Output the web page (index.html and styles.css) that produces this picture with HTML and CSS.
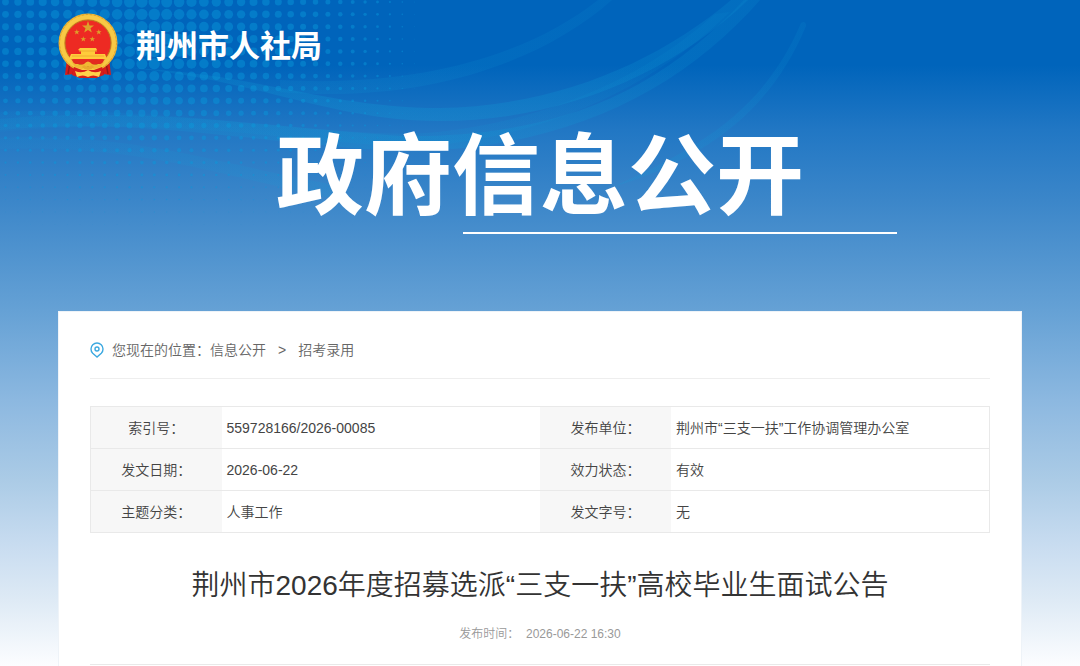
FILE: index.html
```html
<!DOCTYPE html>
<html lang="zh-CN">
<head>
  <meta charset="UTF-8" />
  <meta name="viewport" content="width=device-width, initial-scale=1.0"/>
  <title>荆州市2026年度招募选派“三支一扶”高校毕业生面试公告</title>
  <link rel="stylesheet" href="styles.css">
</head>
<body>
  <svg class="backdrop" width="1080" height="310" viewBox="0 0 1080 310" aria-hidden="true">
    <defs>
      <linearGradient id="ribbon" x1="0" x2="800" y1="0" y2="0" gradientUnits="userSpaceOnUse">
        <stop offset="0" stop-color="#0fa0d8" stop-opacity=".6"/>
        <stop offset=".5" stop-color="#0fa0d8"/>
        <stop offset="1" stop-color="#0fa0d8" stop-opacity=".6"/>
      </linearGradient>
    </defs>
    <g id="dots" fill="#0899dc" fill-opacity="0.45"></g>
    <g fill="url(#ribbon)">
      <path opacity=".25" d="M130 68C260 74 330 108 440 108C560 106 660 60 731 0L748 0C670 75 560 121 440 121C330 121 260 80 130 68Z"/>
      <path opacity=".22" d="M0 119C140 106 260 126 400 136C560 138 660 90 744 0L760 0C680 92 560 152 400 151C260 144 140 116 0 130Z"/>
      <path opacity=".12" d="M0 112C160 106 280 132 410 134C530 128 640 82 715 14L730 12C650 90 540 140 410 147C280 140 160 116 0 132Z"/>
      <path opacity=".13" d="M280 80C420 88 530 54 598 0L612 0C540 64 420 104 280 92Z"/>
      <path opacity=".2" d="M801 23Q806 20 806 26C772 108 710 158 610 188C700 148 764 110 801 23Z"/>
      <path opacity=".14" d="M0 138C140 134 200 160 340 186L340 200C220 176 140 144 0 149Z"/>
    </g>
  </svg>

  <header class="header container">
    <a class="brand" href="#">
      <svg class="emblem" width="60" height="66" viewBox="0 0 60 66" aria-hidden="true">
        <path d="M9 45L7 62L16 61L22 65H38L44 61L53 62L51 45Z" fill="#d71d1a"/>
        <path d="M12 50L10 61M17 54L15 61M48 50L50 61M43 54L45 61" stroke="#98191a" stroke-width="1.4"/>
        <circle cx="30" cy="30" r="29.5" fill="#efb838"/>
        <circle cx="30" cy="30" r="26" fill="none" stroke="#f8c945" stroke-width="4"/>
        <circle cx="30" cy="30" r="28.5" fill="none" stroke="#e0a02c" stroke-width="1" stroke-dasharray="2 2"/>
        <circle cx="30" cy="30" r="23" fill="#ed2a23" stroke="#bd741d"/>
        <g fill="#dda22b">
          <path id="star" d="M30 8L31.5 12.5H36L32.5 15.2L33.8 19.5L30 17L26.2 19.5L27.5 15.2L24 12.5H28.5Z"/>
          <use href="#star" transform="translate(5 12.5) scale(.46)"/>
          <use href="#star" transform="translate(27 12.5) scale(.46)"/>
          <use href="#star" transform="translate(11.5 19.5) scale(.46)"/>
          <use href="#star" transform="translate(20.5 19.5) scale(.46)"/>
        </g>
        <path d="M22 35H38L39 37L37 38V41H47L49 46H11L13 41H23V38L20 37Z" fill="#ffcb3b"/>
        <path d="M21 38H39M14 43H46" stroke="#f0ab30" stroke-width="1"/>
        <path d="M14 47H46L44 51H16Z" fill="#e32b20"/>
        <path d="M13 48Q20 54 26 51Q30 46 34 51Q40 54 47 48L43 54L36 56L30 53L24 56L17 54Z" fill="#f0b834"/>
        <path d="M16 54L24 57H36L44 54L46 62L38 65H22L14 62Z" fill="#d71d1a"/>
        <path d="M17 58Q24 61 30 57Q36 61 43 58L41 64Q35 61 30 64Q25 61 19 64Z" fill="#ffd24a"/>
        <path d="M25 53Q30 58 35 53" fill="none" stroke="#e9a92e" stroke-width="3"/>
      </svg>
      <span>荆州市人社局</span>
    </a>
    <div class="banner">政府信息公开</div>
  </header>

  <main class="card container">
    <nav class="crumbs" aria-label="您现在的位置">
      <svg class="pin" width="14" height="16" viewBox="0 0 14 16" fill="none" stroke="#3da9e0" stroke-width="1.4" aria-hidden="true">
        <path d="M7 15L2.7 11.2A6 6 0 1 1 11.3 11.2Z"/>
        <circle cx="7" cy="7" r="2"/>
      </svg>
      <span>您现在的位置：</span>
      <a href="#">信息公开</a>
      <span class="sep">&gt;</span>
      <a href="#">招考录用</a>
    </nav>

    <table class="info">
      <tr>
        <th scope="row">索引号：</th>
        <td>559728166/2026-00085</td>
        <th scope="row">发布单位：</th>
        <td>荆州市“三支一扶”工作协调管理办公室</td>
      </tr>
      <tr>
        <th scope="row">发文日期：</th>
        <td>2026-06-22</td>
        <th scope="row">效力状态：</th>
        <td>有效</td>
      </tr>
      <tr>
        <th scope="row">主题分类：</th>
        <td>人事工作</td>
        <th scope="row">发文字号：</th>
        <td>无</td>
      </tr>
    </table>

    <h1>荆州市2026年度招募选派“三支一扶”高校毕业生面试公告</h1>
    <p class="published">发布时间：&nbsp; <time datetime="2026-06-22T16:30">2026-06-22 16:30</time></p>
  </main>

  <script src="dots.js"></script>
</body>
</html>
```
FILE: styles.css
```css
* { box-sizing: border-box; }

body {
  margin: 0;
  min-height: 100vh;
  display: flex;
  flex-direction: column;
  font-family: "Liberation Sans", "Noto Sans CJK SC", sans-serif;
  font-size: 14px;
  font-weight: 350;
  line-height: 20px;
  color: #444;
  background: #fff linear-gradient(to bottom,
    #0064bb 0, #0064bb 65px, #2177c4 130px, #3b86c9 200px,
    #65a1d5 310px, #8cb8e0 400px, #abcbe6 480px,
    #c8dcf0 545px, #deeaf5 600px, #fcfdff 666px) no-repeat;
}

a {
  color: inherit;
  text-decoration: none;
}

.container {
  width: calc(100% - 116px);
  margin: 0 auto;
}

/* decoration behind the header */
.backdrop {
  position: absolute;
  top: 0;
  left: 0;
  z-index: -1;
}

.header {
  padding: 13px 0 77px;
  color: #fff;
  font-family: "Noto Sans CJK SC", sans-serif;
  font-weight: 700;
}

.brand {
  display: flex;
  align-items: flex-start;
  gap: 18px;
  font-size: 31px;
  line-height: 62px;
}

.emblem { display: block; }

.banner {
  margin-top: 34px;
  font-size: 88px;
  line-height: 112px;
  text-align: center;
}

.banner::after {
  content: "";
  display: block;
  width: 45%;
  height: 2px;
  margin-top: 7px;
  margin-left: 42%;
  background: #fff;
}

.card {
  flex: 1;
  padding: 28px 31px 0;
  background: #fff;
  border: 1px solid #eef3f8;
  border-bottom: 0;
}

.crumbs {
  display: flex;
  align-items: center;
  padding-bottom: 18px;
  margin-bottom: 27px;
  color: #666;
  border-bottom: 1px solid #eee;
}

.crumbs .pin { margin-right: 8px; }

.crumbs .sep { margin: 0 12px; }

.info {
  width: 100%;
  table-layout: fixed;
  border-collapse: collapse;
  border: 1px solid #e9e9e9;
}

.info tr { border-bottom: 1px solid #e9e9e9; }

.info th,
.info td {
  height: 42px;
  padding: 0 5px;
  font-weight: 350;
}

.info th {
  width: 131px;
  padding: 0;
  background: #f7f7f7;
}

h1 {
  margin: 32px 0 0;
  color: #333;
  font-size: 28px;
  font-weight: 350;
  line-height: 42px;
  text-align: center;
}

.published {
  margin: 17px 0 0;
  padding-bottom: 20px;
  font-size: 12px;
  color: #999;
  text-align: center;
  border-bottom: 1px solid #e9e9e9;
}
```
FILE: dots.js
```js
// halftone dots, largest near the emblem and fading right and down
const dots = document.getElementById("dots");
for (let row = 0; row < 19; row++) {
  for (let col = 0; col < 34; col++) {
    const x = 5.5 + col * 12.4;
    const y = 2 + row * 12.35;
    const fx = x < 150 ? 0.5 + x / 300 : 1 - (x - 150) / 275;
    const fy = y < 60 ? 1 : 1 - (y - 60) / 185;
    const c = document.createElementNS("http://www.w3.org/2000/svg", "circle");
    c.setAttribute("cx", x);
    c.setAttribute("cy", y);
    c.setAttribute("r", 5.8 * Math.pow(Math.max(0, fx), 0.8) * Math.pow(Math.max(0, fy), 1.4));
    dots.appendChild(c);
  }
}
```
